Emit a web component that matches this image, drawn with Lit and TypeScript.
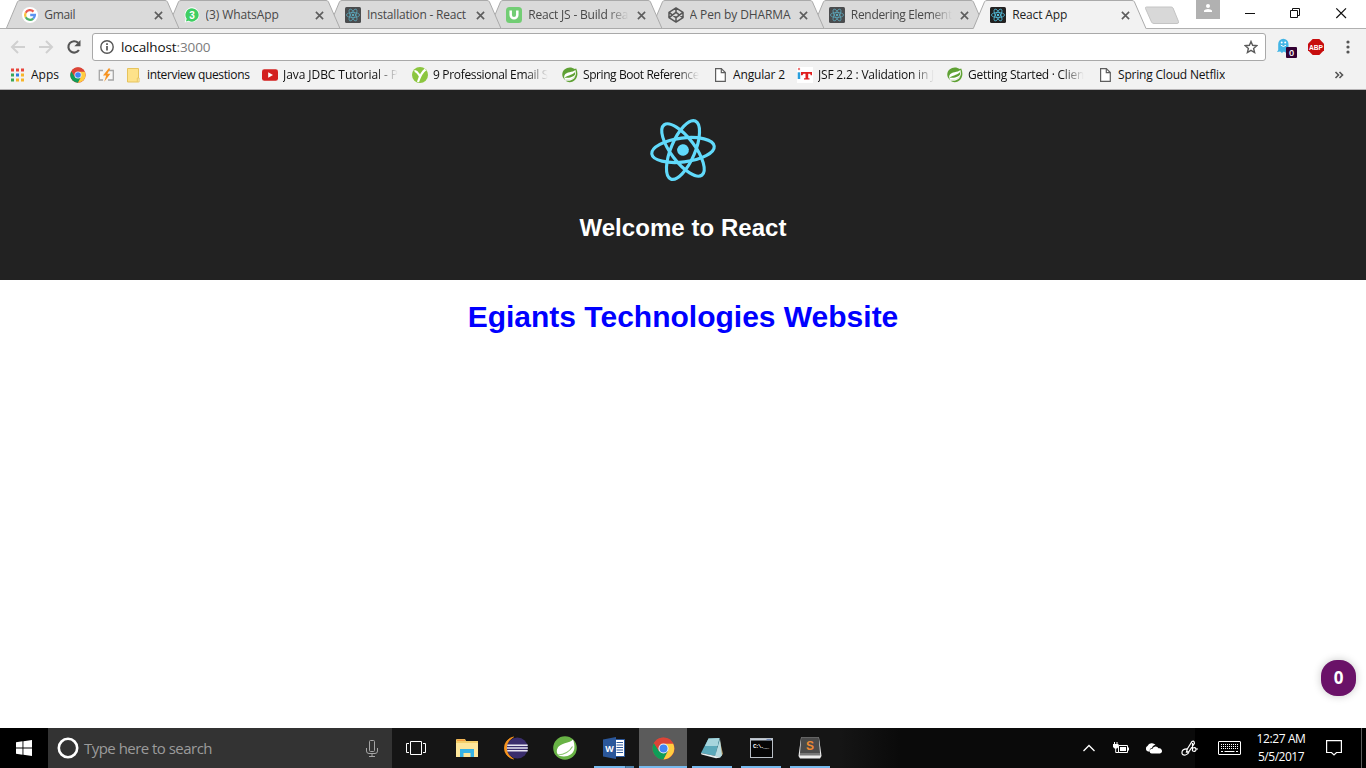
import { LitElement, html, css, svg, nothing } from "lit";
import { customElement, property } from "lit/decorators.js";

/** One line of text whose tracking is adjusted so that it takes `width` pixels. */
@customElement("fit-text")
class FitText extends LitElement {
  @property({ type: Number }) width = 0;
  @property() text = "";
  static styles = css`
    :host { display: block; white-space: pre; text-align: left; }
    .run { display: inline-block; }
  `;
  render() {
    return html`<span class="run">${this.text}</span>`;
  }
  updated() {
    const run = this.renderRoot.querySelector(".run") as HTMLElement;
    run.style.letterSpacing = "0px";
    const natural = run.getBoundingClientRect().width;
    run.style.letterSpacing = `${(this.width - natural) / this.text.length}px`;
  }
}

const atom = (color: string, turn: number, stroke: number) => svg`
  <g fill="none" stroke=${color} stroke-width=${stroke} transform="rotate(${turn})">
    <ellipse rx="11" ry="4.2"/>
    <ellipse rx="11" ry="4.2" transform="rotate(60)"/>
    <ellipse rx="11" ry="4.2" transform="rotate(120)"/>
    <circle r="2.05" fill=${color} stroke="none"/>
  </g>`;

const reactIcon = (bg: string, fg: string) => html`<svg width="16" height="16" viewBox="0 0 16 16">
  <rect width="16" height="16" rx="1.5" fill=${bg}/>
  <g transform="translate(8 8) scale(.6)">${atom(fg, 0, 1.3)}</g></svg>`;

const googleIcon = html`<svg width="16" height="16" viewBox="0 0 16 16">
  <circle cx="8" cy="8" r="8" fill="#fff"/>
  <g fill="none" stroke-width="2.3">
    <path d="M11.5 4.6A4.9 4.9 0 0 0 3.7 5.7" stroke="#ea5b4f"/>
    <path d="M3.7 5.7a4.9 4.9 0 0 0 0 4.6" stroke="#f9c440"/>
    <path d="M3.7 10.3a4.9 4.9 0 0 0 7.5 1.3" stroke="#4fb26a"/>
    <path d="M11.2 11.6A4.9 4.9 0 0 0 12.9 8H8.2" stroke="#5b92f0"/>
  </g></svg>`;

const whatsappIcon = html`<svg width="16" height="16" viewBox="0 0 16 16">
  <path d="M8 .3a7.5 7.5 0 1 1-3.6 14.2L.6 15.6l1.1-3.8A7.6 7.6 0 0 1 8 .3z" fill="#fff"/>
  <path d="M8 1.2a6.7 6.7 0 1 1-3.4 12.5l-2.7.7.8-2.6A6.7 6.7 0 0 1 8 1.2z" fill="#3fce63"/>
  <text x="8" y="11.7" font-family="Liberation Sans,sans-serif" font-weight="700" font-size="10" fill="#fff" text-anchor="middle">3</text></svg>`;

const udacityIcon = html`<svg width="16" height="16" viewBox="0 0 16 16">
  <rect width="16" height="16" rx="3.5" fill="#72cd74"/>
  <path d="M4.7 3.4V8a3.3 3.3 0 0 0 6.6 0V3.4" fill="none" stroke="#fff" stroke-width="2.5"/></svg>`;

const codepenIcon = html`<svg width="16" height="16" viewBox="0 0 16 16" fill="none" stroke="#555" stroke-width="1.5" stroke-linejoin="round">
  <path d="M8 .9 15 5.3v5.4l-7 4.400-7-4.400V5.300zM8 .9v4.400M8 10.700v4.400M1 5.300l7 5.400 7-5.400M1 10.700l7-5.400 7 5.400"/></svg>`;

const chromeIcon = (size: number) => html`<svg width=${size} height=${size} viewBox="0 0 24 24">
  <circle cx="12" cy="12" r="11.500" fill="#db4437"/>
  <path d="M2.040 6.250A11.500 11.500 0 0 0 12 23.500L16.700 14.700 12 12 7.300 14.700z" fill="#0f9d58"/>
  <path d="M21.960 6.700A11.500 11.500 0 0 1 12 23.500L16.700 14.700 14 6.700z" fill="#ffcd40"/>
  <path d="M2.040 6.250 7.300 14.700 12 6.700h9.960A11.500 11.500 0 0 0 2.040 6.250z" fill="#db4437"/>
  <circle cx="12" cy="12" r="5.300" fill="#f4f4f4"/><circle cx="12" cy="12" r="4.200" fill="#4285f4"/></svg>`;

const flashIcon = html`<svg width="17" height="16" viewBox="0 0 17 16">
  <path d="M5 3.500H1.300v9.500H5M11 3.500h4.300v9.500H10" fill="#f7f7f7" stroke="#a5a5a5" stroke-width="1.300"/>
  <path d="M10.800 1.200 5 8.600h3.200L6.200 14.700l6.200-8H9.300l3-5z" fill="#f79421"/></svg>`;

const noteIcon = html`<svg width="13" height="15" viewBox="0 0 13 15">
  <path d="M.5.500h11v9.500l-1 .5v3.500H.5z" fill="#fde28a" stroke="#e6c35c"/>
  <path d="M10.300 10h1.800v4h-1.800z" fill="#fdeeb6" stroke="#e6c35c" stroke-width=".8"/></svg>`;

const youtubeIcon = html`<svg width="16" height="12" viewBox="0 0 16 12">
  <rect y=".3" width="16" height="11.400" rx="2.300" fill="#d3201f"/><path d="M6.200 3.300v5.400L11 6z" fill="#fff"/></svg>`;

const yIcon = html`<svg width="16" height="16" viewBox="0 0 16 16">
  <circle cx="8" cy="8" r="8" fill="#8cc63f"/>
  <path d="M2.500 4.200C5 3.500 6 6.500 7.800 9M13.500 2.500C10.500 4.500 8 9 6 15" fill="none" stroke="#fff" stroke-width="2.200"/></svg>`;

const springIcon = html`<svg width="16" height="16" viewBox="0 0 16 16">
  <path d="M14.200 1.500C15.800 5 16 9 13.600 12.200 11 15.500 6.500 16 3.500 13.800c4.500.4 8.300-.8 10-4.600-2 2.300-6 3-10.300 3.700C-.5 10.500-.7 5.400 2.500 2.500 5.400-.2 9.800-.3 12.800 2.100z" fill="#5fa134"/>
  <path d="M13.400 3.100C10.800 5.900 4.300 4.500 2.500 8.200c-.8 1.800-.2 3.500 1 4.700 3.500-.2 8.200-1 9.900-4.200.9-1.700.5-4 0-5.600z" fill="#fff"/>
  <path d="M13.200 4.500c-1.700 3.600-6.800 3.300-10.700 6.100 2 .8 9.100-.2 10.500-3.100z" fill="#5fa134"/></svg>`;

const pageIcon = html`<svg width="11" height="14" viewBox="0 0 11 14" fill="#fff" stroke="#5e5e5e" stroke-width="1.200">
  <path d="M.6.600h5.700l4 4v8.800H.6z"/><path d="M6.300.600v4h4" fill="none"/></svg>`;

const itIcon = html`<svg width="16" height="16" viewBox="0 0 16 16">
  <rect width="16" height="16" fill="#fff"/><path d="M.7 5.300h2.500V12H.700z" fill="#2a9fdc"/><circle cx="2" cy="2" r="1.200" fill="#e77"/>
  <path d="M4 5h11v3.300h-1.300l-.5-1.500h-2v4.400h1.300V12.500H7v-1.300h1.500V6.800h-2L5.400 8.300H4z" fill="#e01f1f"/></svg>`;

const appsIcon = html`<svg width="14" height="14" viewBox="0 0 14 14">
  ${["#e8453c", "#e8453c", "#e8453c", "#3aa757", "#2f7de1", "#f7b529", "#3aa757", "#f7b529", "#f7b529"].map(
    (c, i) => svg`<rect x=${(i % 3) * 5 + 1} y=${Math.floor(i / 3) * 5 + 0.5} width="3" height="3" fill=${c}/>`
  )}</svg>`;

interface Tab { title: string; width: number; icon: unknown; active?: boolean; clip?: boolean }
const tabs: Tab[] = [
  { title: "Gmail", width: 31, icon: googleIcon },
  { title: "(3) WhatsApp", width: 73, icon: whatsappIcon },
  { title: "Installation - React", width: 99, icon: reactIcon("#4a4c4e", "#5ba6ba") },
  { title: "React JS - Build rea", width: 100, icon: udacityIcon, clip: true },
  { title: "A Pen by DHARMA", width: 101, icon: codepenIcon },
  { title: "Rendering Element", width: 101, icon: reactIcon("#4a4c4e", "#5ba6ba"), clip: true },
  { title: "React App", width: 55, icon: reactIcon("#222", "#53bfdd"), active: true },
];

/** `span` is the distance to the next bookmark, `slot` the icon's share of it. */
interface Mark { span: number; slot: number; icon: unknown; text?: string; width?: number; clip?: boolean }
const marks: Mark[] = [
  { span: 60, slot: 21, icon: appsIcon, text: "Apps", width: 28 },
  { span: 28, slot: 21, icon: chromeIcon(16) },
  { span: 29, slot: 21, icon: flashIcon },
  { span: 135, slot: 20, icon: noteIcon, text: "interview questions", width: 102.5 },
  { span: 150, slot: 21, icon: youtubeIcon, text: "Java JDBC Tutorial - P", width: 115, clip: true },
  { span: 150, slot: 21, icon: yIcon, text: "9 Professional Email S", width: 115, clip: true },
  { span: 153, slot: 21, icon: springIcon, text: "Spring Boot Reference", width: 116, clip: true },
  { span: 82, slot: 18, icon: pageIcon, text: "Angular 2", width: 52 },
  { span: 150, slot: 21, icon: itIcon, text: "JSF 2.2 : Validation in J", width: 116, clip: true },
  { span: 153, slot: 21, icon: springIcon, text: "Getting Started · Clien", width: 116, clip: true },
  { span: 200, slot: 18, icon: pageIcon, text: "Spring Cloud Netflix", width: 107 },
];

const explorerIcon = html`<svg width="22" height="20" viewBox="0 0 22 20">
  <path d="M0 2 .5 1H9l1 2h12v16H0z" fill="#f3cf6a"/><path d="M0 5h22v14H0z" fill="#fde69b"/><path d="M1 1.500h8v1.500H1z" fill="#f39b3f"/>
  <path d="M4 19v-8h14v8h-3.500v-4h-7v4z" fill="#35b2e5"/></svg>`;
const eclipseIcon = html`<svg width="24" height="24" viewBox="0 0 24 24">
  <path d="M9.500 1A11.200 11.200 0 0 0 9.500 23 12.500 12.500 0 0 1 9.500 1z" fill="#f7941e" stroke="#f7941e" stroke-width=".8"/>
  <circle cx="13.300" cy="12" r="10.500" fill="#3a2d6c"/><path d="M3.200 9.200h20.500M2.800 12h21M3.200 14.800h20.500" stroke="#e8e6f2" stroke-width="1.400"/></svg>`;
const bootIcon = html`<svg width="24" height="24" viewBox="0 0 24 24">
  <circle cx="12" cy="12" r="11.800" fill="#68b245"/>
  <path d="M20 3.500C17.500 7.800 6 6 4 13.500c-.8 3.500 1 5.700 3 6.500 7 1.500 13-1 14.300-7 .5-3.500-.3-7-1.300-9.500z" fill="#fff"/>
  <path d="M4.500 19C11 18.500 16.500 16 19.500 10.500" fill="none" stroke="#8cc56f" stroke-width="1.100"/></svg>`;
const wordIcon = html`<svg width="22" height="22" viewBox="0 0 22 22">
  <path d="M12 2.500h9.500v17H12z" fill="#fff" stroke="#2b579a"/><path d="M13.500 5.500h6.500M13.500 8h6.500M13.500 10.500h6.500M13.500 13h6.500M13.500 15.500h6.500" stroke="#2b579a" stroke-width="1.100"/>
  <path d="M0 2.500 13 0v22L0 19.500z" fill="#2b579a"/>
  <text x="6.500" y="14.500" text-anchor="middle" font-family="Open Sans,sans-serif" font-weight="700" font-size="9.500" textLength="8.500" lengthAdjust="spacingAndGlyphs" fill="#fff">W</text></svg>`;
const notepadIcon = html`<svg width="24" height="22" viewBox="0 0 24 22">
  <path d="m19.500 2 3.500 15-2.500 2.500z" fill="#ad925d"/>
  <path d="M8.500 1.500 19.500 1l-4 18L1 16z" fill="#5ba9ba"/><path d="M8.500 1.500 19.500 1l-1.700 8L5 9z" fill="#a6d5dd"/>
  <path d="M19.500 1 15.500 19l5 1.500z" fill="#3e8c9e"/><path d="m20 2 2 16.500-2 2-5-1.300z" fill="#b9dbe0"/>
  <path d="m1 16 14.500 3 5 1.500-4.500.7L1.500 17.500z" fill="#e6eff0"/></svg>`;
const cmdIcon = html`<svg width="23" height="20" viewBox="0 0 23 20">
  <rect x=".5" y=".5" width="22" height="19" fill="#050505" stroke="#b9bfc6"/><path d="M1 1h21v1.500H1z" fill="#c5ced9"/><path d="M16.500 1.200h4.500v1h-4.500z" fill="#5b79b0"/>
  <text x="3" y="9.500" font-family="Liberation Mono,monospace" font-weight="700" font-size="6" fill="#fff" textLength="16">C:\\.__</text></svg>`;
const sublimeIcon = html`<svg width="24" height="22" viewBox="0 0 24 22">
  <path d="M3 .5h18l2.500 18.500-1.500 2.500H2L.5 19z" fill="#ececec"/><path d="M3.200.500h17.600l1.200 15.500H2z" fill="#4b4b4b"/><path d="M2 16h20l.3 2.500H1.700z" fill="#777"/>
  <text x="12" y="13.200" text-anchor="middle" font-family="Liberation Sans,sans-serif" font-weight="700" font-size="13.500" textLength="8" lengthAdjust="spacingAndGlyphs" fill="#f08a32">S</text></svg>`;
const taskViewIcon = html`<svg width="20" height="16" viewBox="0 0 20 16" fill="none" stroke="#fff">
  <path d="M4.500 1.500h11v13h-11zM3 3.500H.5v9H3M17 3.500h2.500v9H17"/></svg>`;

interface App { icon: unknown; state: string }
const apps: App[] = [
  { icon: taskViewIcon, state: "first" },
  { icon: explorerIcon, state: "" },
  { icon: eclipseIcon, state: "" },
  { icon: bootIcon, state: "" },
  { icon: wordIcon, state: "open group" },
  { icon: chromeIcon(23), state: "open focus" },
  { icon: notepadIcon, state: "open" },
  { icon: cmdIcon, state: "open" },
  { icon: sublimeIcon, state: "open" },
];

@customElement("browser-chrome")
class BrowserChrome extends LitElement {
  static styles = css`
    :host { display: block; height: 90px; font: 12px/16px "Open Sans", "Noto Sans", sans-serif; color: #222; text-align: left; }
    svg { display: block; flex: none; }
    .strip { display: flex; height: 29px; background: #fff; box-shadow: inset 0 -1px #b0b0b0; padding-left: 5.500px; box-sizing: border-box; }
    .tabs { display: flex; flex: none; isolation: isolate; }
    .tab { display: grid; width: 174px; height: 29px; margin-right: -12.700px; flex: none; }
    .tab > * { grid-area: 1 / 1; }
    .label { display: grid; grid-template-columns: 22px 101px 1fr; align-items: center; padding: 1px 17px 0 16.800px; height: 29px; box-sizing: border-box; color: #484848; }
    .tab.active .label { color: #222; }
    .label > :last-child { justify-self: end; }
    .name { overflow: hidden; }
    .fade { -webkit-mask-image: linear-gradient(90deg, #000 calc(100% - 22px), transparent); }
    .newtab { margin: 6px 0 0 9px; }
    .window { display: flex; margin-left: auto; flex: none; }
    .user { width: 24px; height: 19px; background: #b1b1b1; display: grid; justify-content: center; }
    .controls { padding: 6px 18px 0 25px; }
    .bar { display: flex; height: 36px; background: #f2f2f2; align-items: center; box-sizing: border-box; padding-left: 10px; }
    .nav { display: flex; width: 82px; gap: 12px; align-items: center; }
    .url { display: flex; align-items: center; width: 1174px; height: 28px; box-sizing: border-box; border: 1px solid #a9a9a9; border-radius: 3px; background: #fff; padding: 0 7px 0 7px; font-size: 13.500px; color: #111; }
    .url fit-text { margin-left: 7px; }
    .url .port { margin-left: 0; color: #7c7c7c; }
    .url .star { margin-left: auto; }
    .ext { display: flex; align-items: center; padding-left: 10px; gap: 9px; }
    .marks { display: flex; height: 25px; box-sizing: border-box; background: #f2f2f2; border-bottom: 1px solid #b6b4b6; padding-left: 10px; padding-bottom: 4px; }
    .mark { display: flex; align-items: center; flex: none; }
    .slot { flex: none; height: 16px; display: grid; align-items: center; }
    .marks .name { max-width: 116px; color: #111; }
    .more { margin-left: auto; align-self: center; padding-right: 22px; }
  `;
  tab(t: Tab, i: number) {
    const fill = t.active ? "#f2f2f2" : "#dadada";
    return html`<div class="tab ${t.active ? "active" : ""}" style="z-index:${t.active ? 20 : 10 - i}">
      <svg width="174" height="29" viewBox="0 0 174 29">
        <path d="M0 29 .8 28 11.500 1.800Q12.200.5 14 .5H159Q160.700.5 161.400 1.800L172.500 28 173.500 29z" fill=${fill}/>
        <path d="M.3 28.500 11.500 1.800Q12.200.5 14 .5H159Q160.700.5 161.400 1.800L173 28.500${t.active ? "" : "H.3"}" fill="none" stroke="#aaa"/>
      </svg>
      <div class="label">${t.icon}
        <div class="name ${t.clip ? "fade" : ""}"><fit-text .text=${t.title} .width=${t.width}></fit-text></div>
        <svg width="9" height="9" viewBox="0 0 9 9"><path d="m.9.900 7.200 7.200M8.100.900.900 8.100" stroke="#5d5d5d" stroke-width="1.600"/></svg>
      </div></div>`;
  }
  render() {
    return html`
      <div class="strip">
        <div class="tabs">${tabs.map((t, i) => this.tab(t, i))}</div>
        <svg class="newtab" width="36" height="19" viewBox="0 0 36 19"><path d="M2.500 1H27q1.500 0 2 1l5.500 13.500q.5 2-1.500 2H10q-1.800 0-2.500-1.500L1.500 2.500Q1 1 2.500 1z" fill="#d8d8d8" stroke="#c4c4c4"/></svg>
        <div class="window">
          <div class="user"><svg width="10" height="14" viewBox="0 0 10 14"><circle cx="5" cy="6" r="2" fill="#fff"/><path d="M1 12v-1.500Q2 8.900 5 8.900t4 1.600V12z" fill="#fff"/></svg></div>
          <svg class="controls" width="103" height="14" viewBox="0 0 103 14" fill="none" stroke="#111">
            <path d="M0 7.500h10M45.500 4.500h7v7h-7zM47.500 4.500v-2h7v7h-2"/><path d="m91.300 2.300 9.700 9.700m0-9.700-9.700 9.700" stroke-width="1.200"/></svg>
        </div>
      </div>
      <div class="bar">
        <div class="nav">
          <svg width="16" height="14" viewBox="0 0 16 14" fill="none" stroke="#d0d0d0" stroke-width="2"><path d="M15 7H2.500M8 1 2 7l6 6"/></svg>
          <svg width="16" height="14" viewBox="0 0 16 14" fill="none" stroke="#d0d0d0" stroke-width="2"><path d="M1 7h12.500M8 1l6 6-6 6"/></svg>
          <svg width="16" height="16" viewBox="0 0 16 16"><path d="M12.900 11a5.700 5.700 0 1 1-.8-7.200" fill="none" stroke="#555" stroke-width="2.100"/><path d="M14.500 1v6.200H8.300z" fill="#555"/></svg>
        </div>
        <div class="url">
          <svg width="14" height="14" viewBox="0 0 14 14"><circle cx="7" cy="7" r="6.200" fill="none" stroke="#555" stroke-width="1.400"/><path d="M7 6v4.600M7 3.300v1.700" stroke="#555" stroke-width="1.700"/></svg>
          <fit-text .text=${"localhost"} .width=${55.5}></fit-text><fit-text class="port" .text=${":3000"} .width=${34}></fit-text>
          <svg class="star" width="14" height="14" viewBox="0 0 14 14"><path d="M7 1.500 8.600 5.300l4.200.4-3.200 2.700 1 4.100L7 10.400l-3.600 2.100 1-4.100L1.200 5.700l4.200-.4z" fill="none" stroke="#5b5b5b" stroke-width="1.400"/></svg>
        </div>
        <div class="ext">
          <svg width="23" height="22" viewBox="0 0 23 22">
            <path d="M2.200 13V7a5 5 0 0 1 10.300 0v8l-1.200-.8-1.400 1.500-2-1.200-2 1.400-1.700-1.500-3.200.5z" fill="#43b5e5" transform="translate(0 1)"/>
            <circle cx="5.700" cy="6.500" r="1" fill="#fff"/><circle cx="9.200" cy="6.500" r="1" fill="#fff"/><path d="M4.800 9.200q2.600 2.600 5.200 0" fill="none" stroke="#fff"/>
            <rect x="10" y="11" width="11" height="11" rx="1" fill="#330033"/>
            <text x="15.500" y="20.300" font-family="Open Sans,sans-serif" font-size="9" font-weight="600" text-anchor="middle" fill="#fff">0</text></svg>
          <svg width="16" height="16" viewBox="0 0 16 16"><path d="M4.700 0h6.600L16 4.700v6.600L11.300 16H4.700L0 11.300V4.700z" fill="#c70d0d"/>
            <text x="8" y="10.900" font-family="Liberation Sans,sans-serif" font-size="8" font-weight="700" text-anchor="middle" fill="#fff" textLength="14" lengthAdjust="spacingAndGlyphs">ABP</text></svg>
          <svg width="30" height="14" viewBox="0 0 30 14" fill="#555"><circle cx="15" cy="2" r="1.600"/><circle cx="15" cy="7" r="1.600"/><circle cx="15" cy="12" r="1.600"/></svg>
        </div>
      </div>
      <div class="marks">
        ${marks.map((m) => html`<div class="mark" style="width:${m.span}px">
          <div class="slot" style="width:${m.slot}px">${m.icon}</div>
          ${m.text ? html`<div class="name ${m.clip ? "fade" : ""}"><fit-text .text=${m.text} .width=${m.width}></fit-text></div>` : nothing}
        </div>`)}
        <svg class="more" width="10" height="8" viewBox="0 0 10 8" fill="none" stroke="#555" stroke-width="1.600"><path d="m1.500 1 3 3-3 3M5.500 1l3 3-3 3"/></svg>
      </div>`;
  }
}

@customElement("task-bar")
class TaskBar extends LitElement {
  static styles = css`
    :host { display: flex; height: 40px; color: #fff; font: 12px/18px "Open Sans", "Noto Sans", sans-serif; text-align: left;
      background: linear-gradient(90deg, #151515 0 840px, #0a0a0a 900px 1195px, #000 1195px); }
    svg { display: block; flex: none; }
    .start { width: 48px; background: #000; display: grid; place-items: center; }
    .search { width: 344px; box-sizing: border-box; background: #333; display: flex; align-items: center; padding: 0 13px 0 9px; font-size: 15px; line-height: 20px; color: #9b9b9b; }
    .search fit-text { margin-left: 5px; flex: 1; }
    .apps { display: flex; gap: 1px; }
    .app { width: 48px; height: 40px; display: grid; place-items: center; background-repeat: no-repeat; }
    .first { margin-right: 2px; }
    .open { background-image: linear-gradient(#76b9ed, #76b9ed); background-size: 40px 2px; background-position: 4px 100%; }
    .focus { background-color: #5b5b5b; background-size: 48px 2px; background-position: 0 100%; }
    .group { background-image: linear-gradient(90deg, #76b9ed 31px, #3d6c91 31px 32px, #4f83ab 32px); }
    .tray { display: grid; grid-template-columns: 32px 32px 34px 36px 44px 60px 45px 10px; margin-left: auto; place-items: center; }
    .clock { display: grid; justify-items: center; }
    .show { width: 1px; height: 40px; background: #5c5c5c; justify-self: start; margin-left: 5px; }
  `;
  render() {
    return html`
      <div class="start"><svg width="16" height="16" viewBox="0 0 16 16" fill="#fff"><path d="M0 2.200 6.500 1.300v6.200H0zM7.400 1.200 16 0v7.500H7.400zM0 8.400h6.500v6.300L0 13.800zM7.400 8.400H16V16l-8.600-1.200z"/></svg></div>
      <div class="search">
        <svg width="22" height="22" viewBox="0 0 22 22"><circle cx="11" cy="11" r="9.200" fill="none" stroke="#fff" stroke-width="2.600"/></svg>
        <fit-text .text=${"Type here to search"} .width=${128}></fit-text>
        <svg width="14" height="17" viewBox="0 0 14 17" fill="none" stroke="#a5a5a5"><rect x="4.500" y=".5" width="5" height="11" rx="1"/><path d="M1.500 8v3q0 2.500 2.500 2.500h6q2.500 0 2.500-2.500V8M7 13.500v3M4 16.500h6"/></svg>
      </div>
      <div class="apps">${apps.map((a) => html`<div class="app ${a.state}">${a.icon}</div>`)}</div>
      <div class="tray">
        <svg width="14" height="8" viewBox="0 0 14 8" fill="none" stroke="#fff" stroke-width="1.300"><path d="m1.500 7 5.500-5.500L12.500 7"/></svg>
        <svg width="16" height="14" viewBox="0 0 16 14"><path d="M5.500 4.500h9v7h-9z" fill="none" stroke="#fff"/><path d="M7 6h6v4H7zM14.500 6.500H16v3h-1.500zM0 3h5.500v3L4 7.500H1.500L0 6z" fill="#fff"/><path d="M1.500 1v2M4 1v2M2.700 7v4.500h3" stroke="#fff" fill="none"/></svg>
        <svg width="16" height="11" viewBox="0 0 16 11"><path d="M2 8.500A3 3 0 0 1 1.500 3 5 5 0 0 1 9.500 1.800C7.500 2.300 6.300 3.500 6 5 4 5 3.300 7 4 8.500z" fill="#fff"/><path d="M5.700 10.500a2.300 2.300 0 0 1 .8-4.700 3.200 3.200 0 0 1 6-.5A2.700 2.700 0 0 1 14 10.500z" fill="#fff"/></svg>
        <svg width="17" height="16" viewBox="0 0 17 16" fill="none" stroke="#fff" stroke-width="1.200"><path d="M5.500 12 6.300 9 11 1.500q1.500-1 2.200.5t-.5 2.500L8 11.500zM11.500 3v8M6.500 8.800Q1.500 8.500 1 12t3.500 3q2.500-.5 3.500-3M11.500 11q3.500 1 3.500-1.500t-3-1.500M14.500 9H17"/></svg>
        <svg width="23" height="14" viewBox="0 0 23 14"><rect x=".5" y=".5" width="22" height="13" fill="none" stroke="#fff" rx=".5"/><path d="M3 3.500h17M3 5.500h17M3 7.500h17" stroke="#fff" stroke-dasharray="1 1"/><path d="M3 10.500h2M6.500 10.500h10M18 10.500h2" stroke="#fff"/></svg>
        <div class="clock"><fit-text .text=${"12:27 AM"} .width=${49}></fit-text><fit-text .text=${"5/5/2017"} .width=${46}></fit-text></div>
        <svg width="16" height="16" viewBox="0 0 16 16" fill="none" stroke="#fff"><path d="M.6.600h14.800v11.900H10.500L8 15l-2.500-2.500H.6z" stroke-width="1.200"/></svg>
        <div class="show"></div>
      </div>`;
  }
}

@customElement("app-root")
class AppRoot extends LitElement {
  static styles = css`
    :host { display: flex; flex-direction: column; width: 1366px; height: 768px; overflow: hidden; background: #fff; position: relative; font-family: "Liberation Sans", Arial, sans-serif; text-align: center; }
    .header { height: 190px; box-sizing: border-box; padding-top: 20px; background: #222; color: #fff; }
    .logo { display: block; margin: 0 auto; }
    h2 { font-size: 24px; line-height: 27px; margin: 24px 0 0; letter-spacing: 0.050px; }
    h1 { font-size: 30px; line-height: 36px; margin: 19px 0 0; color: #00f; }
    .page { flex: 1; }
    .badge { position: absolute; right: 10px; top: 660px; width: 35px; height: 36px; border-radius: 16px; background: #6a1268; color: #fff; font: 700 17px/36px "Open Sans", sans-serif; box-shadow: 0 0 8px rgba(0, 0, 0, 0.22); }
  `;
  render() {
    return html`
      <browser-chrome></browser-chrome>
      <div class="page">
        <div class="header">
          <svg class="logo" width="114" height="80" viewBox="-57 -40 114 80"><g transform="scale(2.860)">${atom("#61dafb", -7, 1.1)}</g></svg>
          <h2>Welcome to React</h2>
        </div>
        <h1>Egiants Technologies Website</h1>
      </div>
      <div class="badge">0</div>
      <task-bar></task-bar>`;
  }
}
